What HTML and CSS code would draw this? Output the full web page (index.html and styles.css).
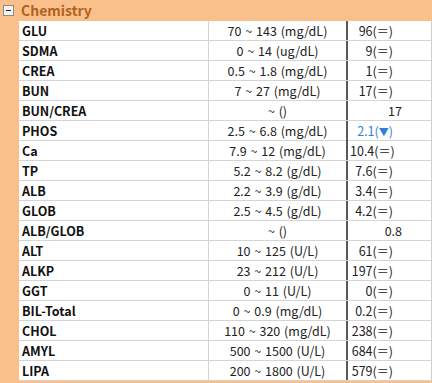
FILE: index.html
```html
<!DOCTYPE html>
<html>
<head>
<meta charset="utf-8">
<link rel="stylesheet" href="styles.css">
</head>
<body>
<div class="panel">
  <div class="header">
    <span class="toggle"><span class="minus"></span></span>
    <span class="title">Chemistry</span>
  </div>
  <div class="body">
    <div class="table">
      <div class="row"><div class="name">GLU</div><div class="range">70 ~ 143 (mg/dL)</div><div class="val">96(<span class="eq">＝</span>)</div></div>
      <div class="row"><div class="name">SDMA</div><div class="range">0 ~ 14 (ug/dL)</div><div class="val">9(<span class="eq">＝</span>)</div></div>
      <div class="row"><div class="name">CREA</div><div class="range">0.5 ~ 1.8 (mg/dL)</div><div class="val">1(<span class="eq">＝</span>)</div></div>
      <div class="row"><div class="name">BUN</div><div class="range">7 ~ 27 (mg/dL)</div><div class="val">17(<span class="eq">＝</span>)</div></div>
      <div class="row"><div class="name">BUN/CREA</div><div class="range">~ ()</div><div class="val plain">17</div></div>
      <div class="row"><div class="name">PHOS</div><div class="range">2.5 ~ 6.8 (mg/dL)</div><div class="val low">2.1(<span class="arrow">▼</span>)</div></div>
      <div class="row"><div class="name">Ca</div><div class="range">7.9 ~ 12 (mg/dL)</div><div class="val">10.4(<span class="eq">＝</span>)</div></div>
      <div class="row"><div class="name">TP</div><div class="range">5.2 ~ 8.2 (g/dL)</div><div class="val">7.6(<span class="eq">＝</span>)</div></div>
      <div class="row"><div class="name">ALB</div><div class="range">2.2 ~ 3.9 (g/dL)</div><div class="val">3.4(<span class="eq">＝</span>)</div></div>
      <div class="row"><div class="name">GLOB</div><div class="range">2.5 ~ 4.5 (g/dL)</div><div class="val">4.2(<span class="eq">＝</span>)</div></div>
      <div class="row"><div class="name">ALB/GLOB</div><div class="range">~ ()</div><div class="val plain">0.8</div></div>
      <div class="row"><div class="name">ALT</div><div class="range">10 ~ 125 (U/L)</div><div class="val">61(<span class="eq">＝</span>)</div></div>
      <div class="row"><div class="name">ALKP</div><div class="range">23 ~ 212 (U/L)</div><div class="val">197(<span class="eq">＝</span>)</div></div>
      <div class="row"><div class="name">GGT</div><div class="range">0 ~ 11 (U/L)</div><div class="val">0(<span class="eq">＝</span>)</div></div>
      <div class="row"><div class="name">BIL-Total</div><div class="range">0 ~ 0.9 (mg/dL)</div><div class="val">0.2(<span class="eq">＝</span>)</div></div>
      <div class="row"><div class="name">CHOL</div><div class="range">110 ~ 320 (mg/dL)</div><div class="val">238(<span class="eq">＝</span>)</div></div>
      <div class="row"><div class="name">AMYL</div><div class="range">500 ~ 1500 (U/L)</div><div class="val">684(<span class="eq">＝</span>)</div></div>
      <div class="row"><div class="name">LIPA</div><div class="range">200 ~ 1800 (U/L)</div><div class="val">579(<span class="eq">＝</span>)</div></div>
    </div>
  </div>
</div>
</body>
</html>
```

FILE: styles.css
```css
html, body {
  margin: 0;
  padding: 0;
  background: #ffffff;
}
body {
  width: 432px;
  height: 383px;
  overflow: hidden;
  font-family: "Noto Sans CJK KR", "Noto Sans", sans-serif;
  font-size: 12.5px;
  color: #111;
}
.panel {
  width: 432px;
  height: 383px;
  background: #f9c08c;
  display: flex;
  flex-direction: column;
}
.header {
  height: 21px;
  display: flex;
  align-items: center;
  box-sizing: border-box;
}
.toggle {
  width: 9px;
  height: 9px;
  margin-left: 3px;
  margin-top: -1px;
  border: 1px solid #8a8a8a;
  background: #f4f4f4;
  display: flex;
  align-items: center;
  justify-content: center;
}
.minus {
  width: 5px;
  height: 1px;
  background: #222;
}
.title {
  margin-left: 7px;
  font-weight: bold;
  font-size: 14px;
  color: #b2621c;
  line-height: 21px;
}
.body {
  padding-left: 19px;
  display: flex;
}
.table {
  width: 412px;
  background: #fff;
  border-right: 1px solid #cfcfcf;
}
.row {
  display: grid;
  grid-template-columns: 190px 139px 2px 1fr;
  height: 20px;
  box-sizing: border-box;
  border-bottom: 1px solid #d4d4d4;
  line-height: 19px;
}
.name {
  padding-left: 3px;
  font-weight: bold;
  border-right: 1px solid #d4d4d4;
  white-space: nowrap;
}
.range {
  text-align: center;
  color: #222;
  white-space: nowrap;
  border-right: 2px solid #5a5a5a;
  word-spacing: 1px;
}
.val {
  grid-column: 4;
  text-align: right;
  padding-right: 38px;
  color: #222;
  white-space: nowrap;
}
.val.plain {
  padding-right: 29px;
}
.val.low {
  color: #2f7fd8;
}
.eq {
  font-size: 12px;
}
.arrow {
  font-size: 10px;
}
```
